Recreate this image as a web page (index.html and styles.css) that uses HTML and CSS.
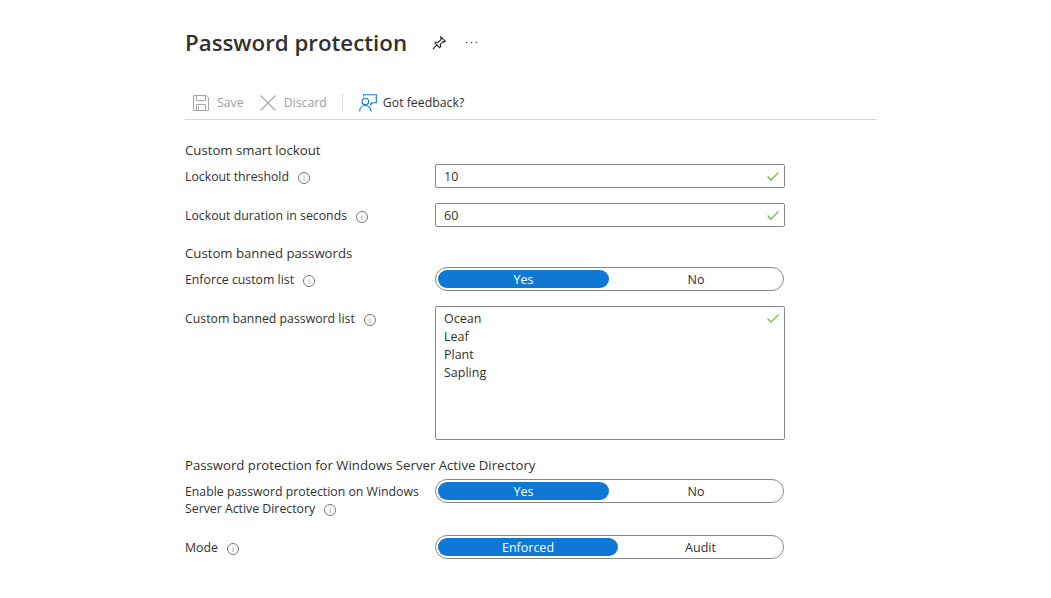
FILE: index.html
```html
<!DOCTYPE html>
<html lang="en">
<head>
<meta charset="utf-8">
<title>Password protection</title>
<link rel="stylesheet" href="styles.css">
</head>
<body>
<main class="page">
  <header class="title-row">
    <h1 class="title">Password protection</h1>
    <svg class="pin" width="16" height="16" viewBox="0 0 16 16" fill="none" stroke="#222" stroke-width="1.1"><path d="M9.8 1.8l4.4 4.4-1 .6-1.2-.2-2.6 2.6.2 2.4-1 1L4 8l1-1 2.4.2L10 4.600l-.2-1.800z"/><path d="M5.800 10.200L1.800 14.200"/></svg>
    <svg class="more" width="13" height="3" viewBox="0 0 13 3" fill="#4a4a4a"><circle cx="1.500" cy="1.500" r=".8"/><circle cx="6.500" cy="1.500" r=".8"/><circle cx="11.500" cy="1.500" r=".8"/></svg>
  </header>
  <nav class="toolbar">
    <span class="tool disabled save">
      <svg width="16" height="16" viewBox="0 0 16 16" fill="none" stroke="#a6a6a6"><path d="M.5.500h13l2 2v13H.5z"/><path d="M3.500.500v5h9v-5M3.500 15.500v-6h9v6"/><path d="M5.500 11.500v4"/></svg>
      <span>Save</span>
    </span>
    <span class="tool disabled discard">
      <svg width="16" height="16" viewBox="0 0 16 16" fill="none" stroke="#a6a6a6" stroke-width="1.100"><path d="M.5.500l15 15M15.500.500l-15 15"/></svg>
      <span>Discard</span>
    </span>
    <span class="divider"></span>
    <span class="tool feedback">
      <svg width="18" height="18" viewBox="0 0 18 18" fill="none" stroke="#0f78d4" stroke-width="1.100"><path d="M4.500 2.500V.7h12.800v8h-3.500l-2 2v-2"/><circle cx="6.300" cy="7.600" r="3.300"/><path d="M.7 17.500c0-3.600 2.300-6 5.600-6s5.600 2.400 5.600 6"/></svg>
      <span>Got feedback?</span>
    </span>
  </nav>

  <h2 class="section first">Custom smart lockout</h2>
  <div class="row">
    <label class="label">Lockout threshold<i class="info">i</i></label>
    <div class="field text-field"><span>10</span><svg class="check" width="12" height="9" viewBox="0 0 13 10" fill="none" stroke="#6bb32f" stroke-width="1.400"><path d="M.5 5l3.700 4L12.500.7"/></svg></div>
  </div>
  <div class="row">
    <label class="label">Lockout duration in seconds<i class="info">i</i></label>
    <div class="field text-field"><span>60</span><svg class="check" width="12" height="9" viewBox="0 0 13 10" fill="none" stroke="#6bb32f" stroke-width="1.400"><path d="M.5 5l3.700 4L12.500.7"/></svg></div>
  </div>

  <h2 class="section">Custom banned passwords</h2>
  <div class="row">
    <label class="label">Enforce custom list<i class="info">i</i></label>
    <div class="toggle"><span class="opt on yes">Yes</span><span class="opt">No</span></div>
  </div>
  <div class="row">
    <label class="label">Custom banned password list<i class="info">i</i></label>
    <div class="field area"><div class="lines"><div>Ocean</div><div>Leaf</div><div>Plant</div><div>Sapling</div></div><svg class="check" width="12" height="9" viewBox="0 0 13 10" fill="none" stroke="#6bb32f" stroke-width="1.400"><path d="M.5 5l3.700 4L12.500.7"/></svg></div>
  </div>

  <h2 class="section third">Password protection for Windows Server Active Directory</h2>
  <div class="row tall">
    <label class="label">Enable password protection on Windows Server Active Directory<i class="info">i</i></label>
    <div class="toggle"><span class="opt on yes">Yes</span><span class="opt">No</span></div>
  </div>
  <div class="row">
    <label class="label">Mode<i class="info">i</i></label>
    <div class="toggle"><span class="opt on enforced">Enforced</span><span class="opt">Audit</span></div>
  </div>
</main>
</body>
</html>
```

FILE: styles.css
```css
* { box-sizing: border-box; }
html, body { margin: 0; padding: 0; background: #fff; }
body {
  font-family: "Open Sans", "Noto Sans", "Liberation Sans", sans-serif;
  font-size: 12.5px;
  color: #323130;
  height: 598px;
  overflow: hidden;
}
.page { width: 691px; margin-left: 185px; }
.title-row { display: flex; align-items: center; height: 86px; }
.title { margin: 0 0 2px; font-size: 22.3px; font-weight: 600; width: 222px; white-space: nowrap; color: #323130; }
.pin { margin-left: 24px; }
.more { margin-left: 18px; margin-bottom: 1px; }
.toolbar { display: flex; align-items: center; height: 34px; border-bottom: 1px solid #d6d6d6; padding-left: 8px; font-size: 12.3px; }
.tool { display: flex; align-items: center; gap: 8px; }
.tool.disabled { color: #a19f9d; }
.discard { margin-left: 16px; }
.divider { width: 1px; height: 18px; background: #d6d6d6; margin: 0 16px 0 15px; }
.feedback { gap: 6px; }
.section { margin: 16px 0 0; font-size: 13.2px; font-weight: 400; line-height: 20px; height: 20px; }
.section.first { margin-top: 20px; }
.section.third { margin-top: 15px; }
.row { display: flex; align-items: flex-start; margin: 4px 0 15px; }
.row.tall { min-height: 41px; }
.label { width: 250px; padding-right: 10px; font-size: 12.3px; line-height: 17px; padding-top: 3.5px; }
.info { display: inline-block; width: 12px; height: 12px; margin-left: 9px; border: 1px solid #7a7876; border-radius: 50%; font-style: normal; font-size: 8px; line-height: 10px; text-align: center; vertical-align: 0; color: #8a8886; }
.field { position: relative; width: 350px; border: 1px solid #8a8886; border-radius: 2px; padding-left: 8px; }
.text-field { height: 24px; line-height: 24px; }
.area { height: 134px; line-height: 18px; padding-top: 3px; }
.check { position: absolute; right: 5px; top: 7px; }
.toggle { display: flex; width: 349px; height: 24px; border: 1px solid #8a8886; border-radius: 12px; padding: 2px; }
.opt { flex: 1; text-align: center; line-height: 19px; height: 18px; border-radius: 9px; padding-left: 2px; }
.opt.on { background: #0f78d4; color: #fff; flex: none; padding-left: 0; }
.yes { width: 171px; }
.enforced { width: 180px; }
```
